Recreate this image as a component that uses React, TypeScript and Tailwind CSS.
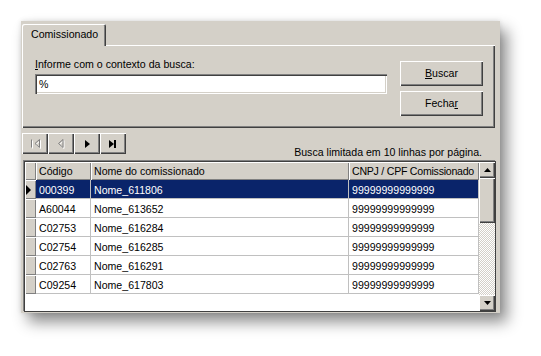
import React from "react";

const raised =
  "shadow-[inset_1px_1px_0_#ffffff,inset_-1px_-1px_0_#404040,inset_-2px_-2px_0_#808080]";
const sunken =
  "shadow-[inset_1px_1px_0_#808080,inset_2px_2px_0_#404040,inset_-1px_-1px_0_#ffffff,inset_-2px_-2px_0_#d4d0c8]";
const headerCell =
  "bg-[#d4d0c8] shadow-[inset_1px_1px_0_#ffffff,inset_-1px_-1px_0_#808080] whitespace-nowrap overflow-hidden";

const rows = [
  ["000399", "Nome_611806"],
  ["A60044", "Nome_613652"],
  ["C02753", "Nome_616284"],
  ["C02754", "Nome_616285"],
  ["C02763", "Nome_616291"],
  ["C09254", "Nome_617803"],
];

function NavButton({ children }: { children: React.ReactNode }) {
  return (
    <div className={`w-[26px] h-[21px] bg-[#d4d0c8] flex items-center justify-center ${raised}`}>
      {children}
    </div>
  );
}

export default function App() {
  return (
    <div className="w-[541px] h-[356px] bg-white pt-[21px] pl-[21px] font-['Liberation_Sans',Arial,sans-serif] text-[10.6px] leading-[13px] text-black">
      <div className="w-[479px] h-[292px] bg-[#d4d0c8] pl-px pr-[5px] pt-[3px] flex flex-col shadow-[7px_9px_14px_rgba(0,0,0,0.45),0_0_5px_rgba(0,0,0,0.12)]">
        {/* tab strip */}
        <div className="flex h-[21px]">
          <div className="relative z-10 w-[84px] h-[22px] bg-[#d4d0c8] pl-[9px] pt-[4px] rounded-tl-[2px] rounded-tr-[2px] whitespace-nowrap shadow-[inset_1px_1px_0_#ffffff,inset_-1px_0_0_#404040,inset_-2px_0_0_#808080]">
            Comissionado
          </div>
        </div>
        {/* tab panel */}
        <div className={`h-[83px] flex pl-[13px] pr-[12px] ${raised}`}>
          <div className="flex-1 pt-[13px] flex flex-col">
            <div className="whitespace-nowrap">
              <span className="underline">I</span>nforme com o contexto da busca:
            </div>
            <div className={`mt-[3px] w-[352px] h-[20px] bg-white pl-[4px] flex items-center ${sunken}`}>
              %
            </div>
          </div>
          <div className="pt-[16px] flex flex-col gap-[5px]">
            <div className={`w-[83px] h-[25px] flex items-center justify-center ${raised}`}>
              <span>
                <span className="underline">B</span>uscar
              </span>
            </div>
            <div className={`w-[83px] h-[25px] flex items-center justify-center ${raised}`}>
              <span>
                Fecha<span className="underline">r</span>
              </span>
            </div>
          </div>
        </div>
        {/* nav row */}
        <div className="mt-[5px] h-[26px] flex justify-between pr-[13px]">
          <div className="flex self-start">
            <NavButton>
              <svg width="11" height="10" viewBox="0 0 11 10">
                <g fill="none" strokeWidth="1">
                  <path d="M2.5 1.5v8M10.5 1.5L6 5.5L10.5 9.5Z" stroke="#ffffff" />
                  <path d="M1.5 0.5v8M9.5 0.5L5 4.5L9.5 8.5Z" stroke="#808080" />
                </g>
              </svg>
            </NavButton>
            <NavButton>
              <svg width="8" height="10" viewBox="0 0 8 10">
                <g fill="none" strokeWidth="1">
                  <path d="M7 1.5L2.5 5.5L7 9.5Z" stroke="#ffffff" />
                  <path d="M6 0.5L1.5 4.5L6 8.5Z" stroke="#808080" />
                </g>
              </svg>
            </NavButton>
            <NavButton>
              <svg width="7" height="8" viewBox="0 0 7 8">
                <path d="M1 0L6 4L1 8Z" fill="#000000" />
              </svg>
            </NavButton>
            <NavButton>
              <svg width="10" height="8" viewBox="0 0 10 8">
                <path d="M1 0L6 4L1 8Z" fill="#000000" />
                <rect x="6" y="0" width="2" height="8" fill="#000000" />
              </svg>
            </NavButton>
          </div>
          <div className="self-end whitespace-nowrap">Busca limitada em 10 linhas por página.</div>
        </div>
        {/* grid */}
        <div className="mt-[2px] ml-[2px] w-[472px] h-[151px] border border-[#404040] bg-white flex shadow-[-1px_-1px_0_#808080]">
          <div className="flex-1 flex flex-col min-w-0">
            <div className="flex h-[18px]">
              <div className={`w-[11px] ${headerCell}`} />
              <div className={`w-[55px] pl-[3px] pt-[3px] ${headerCell}`}>Código</div>
              <div className={`w-[258px] pl-[3px] pt-[3px] ${headerCell}`}>Nome do comissionado</div>
              <div className={`flex-1 pl-[3px] pt-[3px] tracking-[-0.25px] ${headerCell}`}>CNPJ / CPF Comissionado</div>
            </div>
            {rows.map(([code, name], i) => {
              const sel = i === 0;
              const cell = sel
                ? "bg-[#0a246a] text-white border-r border-b border-[#c0c0c0] pl-[3px] pt-[4px] whitespace-nowrap"
                : "bg-white border-r border-b border-[#c0c0c0] pl-[3px] pt-[4px] whitespace-nowrap";
              return (
                <div key={code} className="flex h-[19px]">
                  <div className={`w-[11px] flex items-center ${headerCell}`}>
                    {sel && (
                      <svg width="6" height="10" viewBox="0 0 6 10" className="ml-[1px]">
                        <path d="M0 0L5 5L0 10Z" fill="#000000" />
                      </svg>
                    )}
                  </div>
                  <div className={`w-[55px] ${cell}`}>{code}</div>
                  <div className={`w-[258px] ${cell}`}>{name}</div>
                  <div className={`flex-1 ${cell}`}>99999999999999</div>
                </div>
              );
            })}
            <div className="flex-1 bg-white" />
          </div>
          {/* scrollbar */}
          <div className="w-[16px] flex flex-col">
            <div className={`h-[16px] bg-[#d4d0c8] flex items-center justify-center ${raised}`}>
              <svg width="7" height="4" viewBox="0 0 7 4">
                <path d="M3.5 0L7 4H0Z" fill="#000000" />
              </svg>
            </div>
            <div className={`h-[45px] bg-[#d4d0c8] ${raised}`} />
            <div className="flex-1 bg-[repeating-conic-gradient(#d4d0c8_0%_25%,#ffffff_0%_50%)] bg-size-[2px_2px]" />
            <div className={`h-[16px] bg-[#d4d0c8] flex items-center justify-center ${raised}`}>
              <svg width="7" height="4" viewBox="0 0 7 4">
                <path d="M0 0H7L3.5 4Z" fill="#000000" />
              </svg>
            </div>
          </div>
        </div>
      </div>
    </div>
  );
}
